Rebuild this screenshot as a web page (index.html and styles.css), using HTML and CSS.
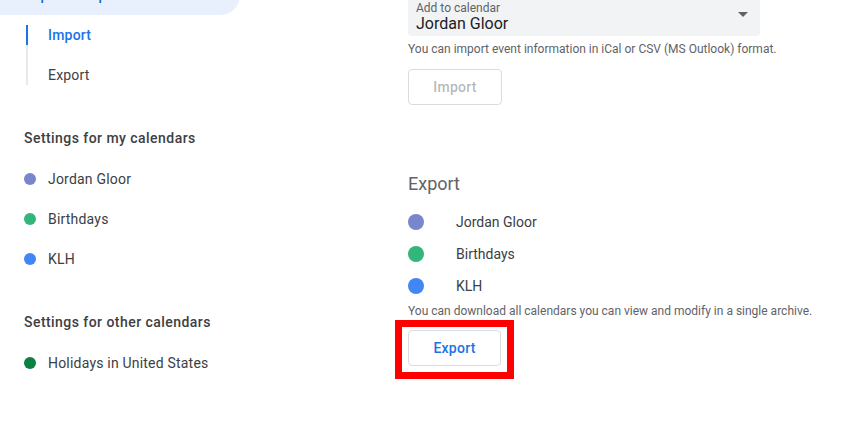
FILE: index.html
```html
<!DOCTYPE html>
<html>
<head>
<meta charset="utf-8">
<link rel="stylesheet" href="styles.css">
</head>
<body>
<div class="page">
  <aside class="sidebar">
    <div class="nav-active">Import &amp; export</div>
    <div class="subnav">
      <div class="subnav-item current">Import</div>
      <div class="subnav-item">Export</div>
    </div>
    <div class="side-heading first">Settings for my calendars</div>
    <div class="side-list">
      <div class="side-item"><span class="dot lavender"></span>Jordan Gloor</div>
      <div class="side-item"><span class="dot sage"></span>Birthdays</div>
      <div class="side-item"><span class="dot blueberry"></span>KLH</div>
    </div>
    <div class="side-heading second">Settings for other calendars</div>
    <div class="side-list">
      <div class="side-item"><span class="dot basil"></span>Holidays in United States</div>
    </div>
  </aside>
  <main class="content">
    <div class="select">
      <div class="select-text">
        <div class="select-label">Add to calendar</div>
        <div class="select-value">Jordan Gloor</div>
      </div>
      <svg class="select-arrow" width="10" height="5" viewBox="0 0 10 5"><path d="M0 0 L10 0 L5 5 Z" fill="#5f6368"/></svg>
    </div>
    <div class="hint hint-import">You can import event information in iCal or CSV (MS Outlook) format.</div>
    <button class="btn btn-disabled">Import</button>
    <div class="section-title">Export</div>
    <div class="export-list">
      <div class="export-item"><span class="big-dot lavender"></span>Jordan Gloor</div>
      <div class="export-item"><span class="big-dot sage"></span>Birthdays</div>
      <div class="export-item"><span class="big-dot blueberry"></span>KLH</div>
    </div>
    <div class="hint hint-export">You can download all calendars you can view and modify in a single archive.</div>
    <div class="export-wrap">
      <button class="btn btn-primary">Export</button>
      <div class="highlight-box"></div>
    </div>
  </main>
</div>
</body>
</html>
```

FILE: styles.css
```css
* { box-sizing: border-box; }
html, body {
  margin: 0;
  padding: 0;
  background: #ffffff;
  overflow: hidden;
}
body {
  font-family: Roboto, "Liberation Sans", Arial, sans-serif;
  color: #3c4043;
  width: 867px;
  height: 434px;
}
.page {
  display: flex;
  align-items: flex-start;
}
.sidebar {
  width: 408px;
  flex-shrink: 0;
}
.nav-active {
  width: 240px;
  height: 40px;
  margin-top: -25px;
  background: #e8f0fe;
  border-radius: 0 20px 20px 0;
  padding-left: 24px;
  line-height: 40px;
  font-size: 14px;
  font-weight: 500;
  color: #1967d2;
  letter-spacing: 0.2px;
}
.subnav {
  margin-top: 10px;
  margin-left: 26px;
  border-left: 2px solid #e8eaed;
  display: flex;
  flex-direction: column;
  gap: 20px;
}
.subnav-item {
  position: relative;
  padding-left: 20px;
  line-height: 20px;
  height: 20px;
  font-size: 14px;
  letter-spacing: 0.2px;
  color: #3c4043;
}
.subnav-item.current {
  color: #1a73e8;
  font-weight: 500;
}
.subnav-item.current::before {
  content: "";
  position: absolute;
  left: -2px;
  top: 0;
  width: 2px;
  height: 20px;
  background: #1a73e8;
}
.side-heading {
  padding-left: 24px;
  line-height: 20px;
  font-size: 14px;
  font-weight: 500;
  color: #3c4043;
  letter-spacing: 0.45px;
}
.side-heading.first { margin-top: 43px; }
.side-heading.second { margin-top: 33px; }
.side-list {
  margin-top: 11px;
  display: flex;
  flex-direction: column;
}
.side-item {
  height: 40px;
  display: flex;
  align-items: center;
  padding-left: 24px;
  font-size: 14px;
  letter-spacing: 0.2px;
  color: #3c4043;
}
.dot {
  width: 12px;
  height: 12px;
  border-radius: 50%;
  margin-right: 12px;
  flex-shrink: 0;
}
.lavender { background: #7986cb; }
.sage { background: #33b679; }
.blueberry { background: #4285f4; }
.basil { background: #0b8043; }

.content {
  flex: 1;
  display: flex;
  flex-direction: column;
  align-items: flex-start;
}
.select {
  width: 352px;
  height: 56px;
  margin-top: -20px;
  background: #f1f3f4;
  border-radius: 0 0 4px 4px;
  display: flex;
  align-items: flex-start;
  justify-content: space-between;
  padding: 20px 8px 0 8px;
}
.select-label {
  font-size: 12px;
  line-height: 16px;
  color: #5f6368;
}
.select-value {
  font-size: 16px;
  line-height: 16px;
  color: #202124;
}
.select-arrow {
  margin-top: 12px;
  margin-right: 4px;
}
.hint {
  font-size: 12px;
  line-height: 16px;
  color: #5f6368;
}
.hint-import { margin-top: 5px; }
.hint-export { margin-top: 1px; }
.btn {
  font-family: Roboto, "Liberation Sans", Arial, sans-serif;
  font-size: 14px;
  font-weight: 500;
  letter-spacing: 0.25px;
  height: 36px;
  padding: 0 23px;
  background: #ffffff;
  border: 1px solid #dadce0;
  border-radius: 4px;
}
.btn-disabled {
  margin-top: 12px;
  width: 94px;
  color: rgba(60, 64, 67, 0.38);
}
.btn-primary {
  width: 93px;
  color: #1a73e8;
}
.section-title {
  margin-top: 67px;
  font-size: 18px;
  line-height: 24px;
  color: #5f6368;
}
.export-list {
  margin-top: 10px;
  display: flex;
  flex-direction: column;
}
.export-item {
  height: 32px;
  display: flex;
  align-items: center;
  font-size: 14px;
  color: #3c4043;
}
.big-dot {
  width: 16px;
  height: 16px;
  border-radius: 50%;
  margin-right: 32px;
  flex-shrink: 0;
}
.export-wrap {
  position: relative;
  margin-top: 11px;
}
.highlight-box {
  position: absolute;
  left: -13px;
  top: -10px;
  width: 119px;
  height: 59px;
  border: 7px solid #ff0000;
}
```
